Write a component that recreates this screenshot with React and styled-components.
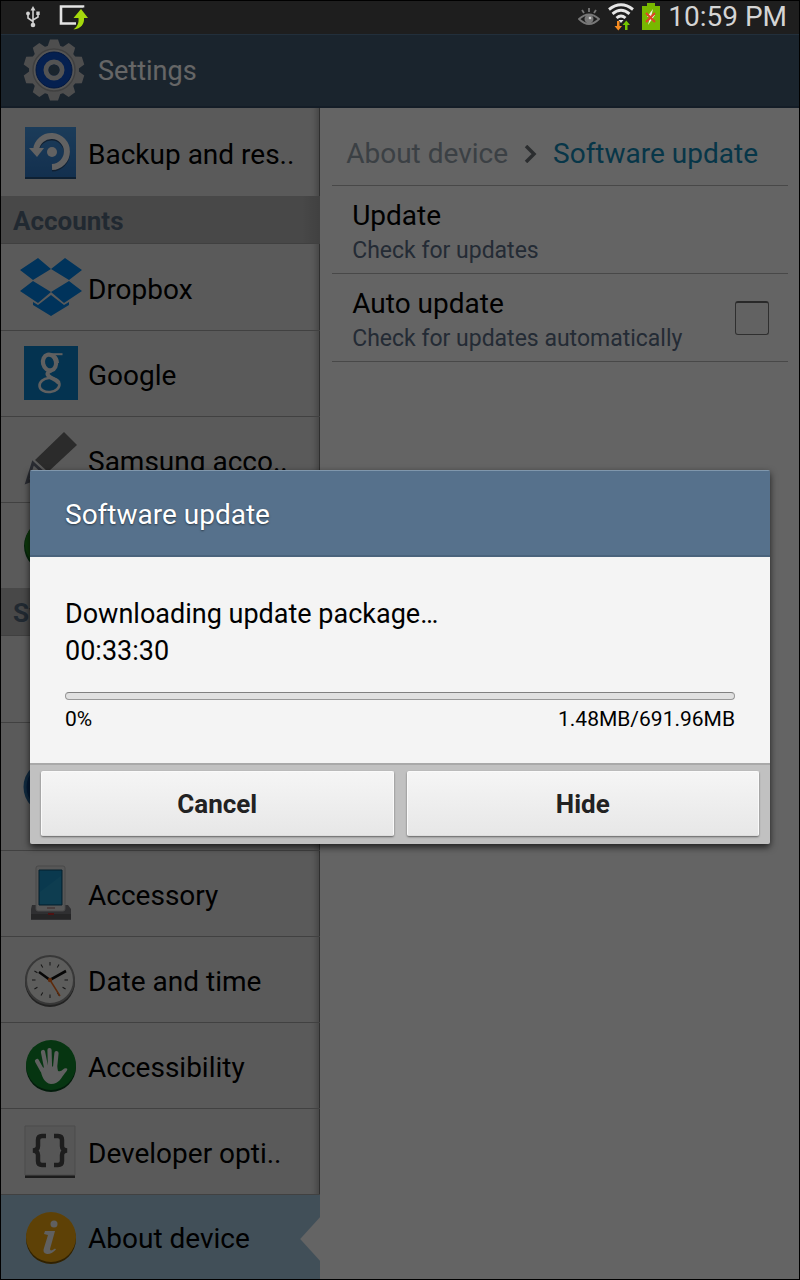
import React from 'react';
import styled, { createGlobalStyle } from 'styled-components';

const Global = createGlobalStyle`
  * { box-sizing: border-box; }
  body { margin: 0; background: #000; font-family: Roboto, "Liberation Sans", sans-serif; }
  button, input { font-family: inherit; }
  h1, h2, p, ul, ol { margin: 0; padding: 0; font-weight: 400; list-style: none; }
  svg { display: block; }
`;

const Page = styled.div`
  display: flex;
  flex-direction: column;
  min-height: 100vh;
  border: 1px solid #000;
  background: #f9f9f9;
`;

const StatusBar = styled.div`
  display: flex;
  align-items: center;
  height: 33px;
  padding: 0 12px 2px 24px;
  background: #1e1e1e;
  color: #d4d4d4;
`;

const StatusGroup = styled.div`
  display: flex;
  align-items: center;
  gap: ${(p) => p.$gap}px;
  margin-left: ${(p) => (p.$end ? 'auto' : '0')};
`;

const Clock = styled.time`
  font-size: 28px;
  line-height: 32px;
`;

const Screen = styled.div`
  position: relative;
  flex: 1;
  display: flex;
  flex-direction: column;
`;

const AppBar = styled.header`
  display: flex;
  align-items: center;
  gap: 12px;
  height: 74px;
  padding: 0 0 2px 21px;
  background: #435a72;
  border-top: 1px solid #567595;
  border-bottom: 2px solid #344a61;
  color: #fff;
`;

const AppTitle = styled.h1`
  padding-top: 2px;
  font-size: 27px;
  line-height: 36px;
`;

const Columns = styled.div`
  flex: 1;
  display: flex;
`;

const Sidebar = styled.nav`
  width: 40%;
  background: #e2e2e2;
  box-shadow: inset -1px 0 0 #777, inset -8px 0 6px -5px rgba(0, 0, 0, 0.28);
`;

const GroupTitle = styled.h2`
  height: 48px;
  padding-left: 12px;
  background: linear-gradient(90deg, #b5b5b5 94%, #a2a2a2);
  border-bottom: 1px solid #a0a0a0;
  color: #54677b;
  font-size: 26px;
  font-weight: 700;
  line-height: 50px;
`;

const NavItem = styled.li`
  border-top: 1px solid ${(p) => (p.$line ? '#a2a2a2' : 'transparent')};
`;

const NavLink = styled.a`
  position: relative;
  display: flex;
  align-items: center;
  gap: 5px;
  height: ${(p) => p.$height || 85}px;
  padding-left: 18px;
  background: ${(p) => (p.$selected ? '#a4c6dd' : 'transparent')};
  color: #000;
  font-size: 28px;
  line-height: 36px;
  text-decoration: none;
  white-space: nowrap;
`;

const NavIcon = styled.span`
  width: 64px;
  height: 64px;
`;

const NavLabel = styled.span`
  padding-top: 4px;
`;

const Pointer = styled.span`
  position: absolute;
  right: 0;
  top: 22px;
  width: 20px;
  height: 44px;
  background: #f9f9f9;
  clip-path: polygon(100% 0, 0 50%, 100% 100%);
`;

const Detail = styled.main`
  flex: 1;
  padding: 0 11px 0 12px;
`;

const Crumbs = styled.nav`
  display: flex;
  align-items: center;
  gap: 16px;
  height: 78px;
  padding: 15px 14px 0;
  border-bottom: 1px solid #b4b4b4;
  font-size: 28px;
  line-height: 36px;
  white-space: nowrap;
`;

const Crumb = styled.a`
  color: ${(p) => (p.$current ? '#1387b4' : '#93a0aa')};
  text-decoration: none;
`;

const Setting = styled.div`
  display: flex;
  align-items: center;
  justify-content: space-between;
  height: 88px;
  padding: 0 19px 0 20px;
  border-bottom: 1px solid #b4b4b4;
`;

const SettingText = styled.label`
  display: flex;
  flex-direction: column;
  padding-top: 6px;
`;

const SettingName = styled.span`
  color: #000;
  font-size: 28px;
  line-height: 36px;
`;

const SettingNote = styled.span`
  color: #5a6c84;
  font-size: 23px;
  line-height: 34px;
`;

const CheckBox = styled.input`
  appearance: none;
  width: 34px;
  height: 34px;
  margin: 0;
  border: 1px solid #777;
  border-top: 2px solid #666;
  border-radius: 3px;
  background: #f4f4f4;
`;

const Overlay = styled.div`
  position: absolute;
  inset: 0;
  display: flex;
  align-items: center;
  justify-content: center;
  padding: 1px 29px 0;
  background: rgba(0, 0, 0, 0.6);
`;

const Dialog = styled.section`
  width: 100%;
  border-radius: 2px;
  overflow: hidden;
  box-shadow: 0 3px 7px rgba(0, 0, 0, 0.7);
`;

const DialogTitle = styled.h2`
  height: 87px;
  padding-left: 35px;
  background: #56718c;
  border-top: 1px solid #8097ac;
  border-bottom: 2px solid #4a637c;
  color: #fff;
  font-size: 28px;
  line-height: 87px;
  text-shadow: 0 1px 2px rgba(0, 0, 0, 0.5);
`;

const DialogBody = styled.div`
  padding: 39px 35px 30px;
  background: #f4f4f4;
  color: #000;
`;

const Message = styled.p`
  font-size: 27px;
  line-height: 37px;
`;

const Track = styled.div`
  height: 8px;
  margin: 22px 0 5px;
  border: 1px solid #979797;
  border-top-color: #808080;
  border-radius: 4px;
  background: #e0e0e0;
`;

const Figures = styled.div`
  display: flex;
  justify-content: space-between;
  font-size: 21px;
  line-height: 28px;
`;

const Actions = styled.div`
  display: flex;
  gap: 13px;
  padding: 6px 11px 8px;
  background: #c1c1c1;
  border-top: 2px solid #a9a9a9;
`;

const ActionButton = styled.button`
  flex: 1;
  height: 65px;
  padding: 0;
  border: 1px solid #fafafa;
  border-bottom-color: #dedede;
  border-radius: 2px;
  background: linear-gradient(#f5f5f5, #e7e7e7);
  box-shadow: 0 1px 2px rgba(0, 0, 0, 0.5);
  color: #222;
  font-size: 26px;
  font-weight: 700;
`;

const UsbIcon = () => (
  <svg width="16" height="22" viewBox="0 0 16 22" fill="none" stroke="#d0d0d0" strokeWidth="1.6">
    <path d="M8 3v16M8 15.500 3 12V8M8 14l5-3V7" />
    <path d="M8 0l2.500 4.500h-5z" fill="#d0d0d0" stroke="none" />
    <circle cx="8" cy="19" r="2.300" fill="#d0d0d0" stroke="none" />
    <circle cx="3" cy="7.500" r="1.900" fill="#d0d0d0" stroke="none" />
    <path d="M11.300 5.500h3.400v3.400h-3.400z" fill="#d0d0d0" stroke="none" />
  </svg>
);

const UpdateIcon = () => (
  <svg width="30" height="26" viewBox="0 0 30 26">
    <path d="M24 3.500V2.500H2v17h15" fill="none" stroke="#e4e4e4" strokeWidth="2.600" />
    <path d="M22 5l7 9h-4c.5 6-3 10.500-10.500 11.500 4-3 5.500-6.500 5-11.500h-5z" fill="#a4d80c" />
  </svg>
);

const EyeIcon = () => (
  <svg width="22" height="20" viewBox="0 0 22 20" fill="none" stroke="#777" strokeWidth="1.800">
    <path d="M1 12q10-9 20 0-10 10-20 0z" />
    <circle cx="11" cy="12" r="3.600" fill="#777" />
    <circle cx="12" cy="11" r="1.300" fill="#ccc" stroke="none" />
    <path d="M11 5V1M6 6 4 3M16 6l2-3" />
  </svg>
);

const WifiIcon = () => (
  <svg width="26" height="28" viewBox="0 0 26 28" fill="none" stroke="#e6e6e6" strokeWidth="2.900">
    <path d="M1 6.500q12-9.500 24 0M4.500 10.800q8.500-7 17 0M8.500 15q4.500-4 9 0" />
    <path d="M10.500 17h5L13 20z" fill="#e6e6e6" stroke="none" />
    <path d="M9 18h2.500v5H14l-3.700 4.500L6.500 23H9z" fill="#f58a1f" stroke="none" />
    <path d="M17 27v-5h-2.500l3.800-4.500L22 22h-2.500v5z" fill="#74c700" stroke="none" />
  </svg>
);

const BatteryIcon = () => (
  <svg width="18" height="27" viewBox="0 0 18 27">
    <path d="M5 0h8v3h5v24H0V3h5z" fill="#78b800" />
    <path d="M11 6 5 14h3l-2 8 7-10H9.500z" fill="#f2f2e4" />
    <path d="M4 10l9 9M13 10l-9 9" stroke="#e04426" strokeWidth="2.200" />
  </svg>
);

const GearIcon = () => (
  <svg width="64" height="64" viewBox="-32 -32 64 64">
    <g fill="#c4c4c4">
      {[0, 36, 72, 108, 144, 180, 216, 252, 288, 324].map((a) => (
        <path key={a} d="M-7-22-4-30.500h8L7-22z" transform={`rotate(${a})`} />
      ))}
      <circle r="25" />
    </g>
    <circle r="21" fill="#d4d4d4" stroke="#a0a0a0" strokeWidth="1.500" />
    <circle r="18" fill="#0d50c8" stroke="#073a9c" />
    <circle r="8" fill="none" stroke="#cfcfcf" strokeWidth="5" />
    <circle r="5.500" fill="#435a72" />
  </svg>
);

const BackupIcon = () => (
  <svg width="64" height="64" viewBox="1 0 64 64">
    <defs>
      <linearGradient id="backup" x1="0" y1="0" x2="0" y2="1">
        <stop offset="0" stopColor="#4596e0" />
        <stop offset="1" stopColor="#3078c4" />
      </linearGradient>
    </defs>
    <path d="M7 8h51v50H7z" fill="#24507e" />
    <path d="M7 6h51v50H7z" fill="url(#backup)" />
    <g transform="translate(0 1.500)">
      <path d="M18 29a15.500 15.500 0 1 1 16 17" fill="none" stroke="#28507c" strokeWidth="6" />
    </g>
    <path d="M18 29a15.500 15.500 0 1 1 16 17" fill="none" stroke="#f4f4f4" strokeWidth="6" />
    <path d="M11 27h15l-7 9z" fill="#f4f4f4" />
    <circle cx="34" cy="31" r="5" fill="#f4f4f4" />
  </svg>
);

const DropboxIcon = () => (
  <svg width="64" height="64" viewBox="0 0 64 64" fill="#0080e4">
    <path d="M19 2 32 13 14 24 1 14zM46 2 63 14 50 24 32 13zM1 35 14 25 32 36 19 47zM50 25 63 35 45 47 32 36zM32 39 45 49l5-3v3L32 60 14 49v-3l5 3z" />
  </svg>
);

const GoogleIcon = () => (
  <svg width="64" height="64" viewBox="0 1 64 64">
    <path d="M5 5h54v54H5z" fill="#0c80c8" />
    <g fill="none" stroke="#f0f0f0">
      <ellipse cx="30.500" cy="21.500" rx="6.500" ry="8" strokeWidth="4.200" transform="rotate(-14 30.500 21.500)" />
      <path d="M31 13.200h12.500" strokeWidth="2" />
      <path d="M35 14q4 3 4 8" strokeWidth="2" />
      <path d="M32 29.500c-4 2-5 4-1 6.500q6 3 9 6" strokeWidth="4" />
      <ellipse cx="30.500" cy="44" rx="10" ry="7" strokeWidth="2.600" transform="rotate(-6 30.500 44)" />
    </g>
  </svg>
);

const PencilIcon = () => (
  <svg width="64" height="64" viewBox="0 0 64 64">
    <path d="M45 4 58 17 29 44 16 32z" fill="#6b6b6b" />
    <path d="M14 35 27 47 8 54z" fill="#ddd" stroke="#666c7c" strokeWidth="3" />
  </svg>
);

const AddIcon = () => (
  <svg width="64" height="64" viewBox="0 0 64 64">
    <circle cx="31" cy="32" r="26" fill="#0b5a1c" />
    <circle cx="31" cy="30" r="25" fill="#1f8a1c" />
    <path d="M31 16v28M17 30h28" stroke="#fff" strokeWidth="7" />
  </svg>
);

const PowerIcon = () => (
  <svg width="64" height="64" viewBox="0 0 64 64">
    <circle cx="31" cy="32" r="25" fill="#0b3f80" stroke="#2a689c" strokeWidth="3" />
  </svg>
);

const AccessoryIcon = () => (
  <svg width="64" height="64" viewBox="0 0 64 64">
    <path d="M13 43h36l3 4v11H12V47z" fill="#77777c" />
    <path d="M12 52h40v5H12z" fill="#5c5c60" />
    <rect x="17" y="4" width="29" height="45" rx="2" fill="#dadada" stroke="#b4b4b4" />
    <path d="M20 8h23v35H20z" fill="#1a90c4" stroke="#0d4c6c" />
    <path d="m21 30 21-16v28H21z" fill="#2ca0cc" opacity=".6" />
    <path d="M28 46h8" stroke="#a88" strokeWidth="1.500" />
    <path d="M29 52h6" stroke="#c03030" strokeWidth="2" />
  </svg>
);

const ClockIcon = () => (
  <svg width="64" height="64" viewBox="-32 -33 64 64">
    <circle cx="-1" cy="1" r="25" fill="#555" />
    <circle cx="-1" cy="-1" r="24" fill="#e8e8e6" stroke="#8c8c8c" strokeWidth="2" />
    {[0, 30, 60, 90, 120, 150, 180, 210, 240, 270, 300, 330].map((a) => (
      <path key={a} d="M0-18v3.500" transform={`translate(-1 -1) rotate(${a})`} stroke="#333" />
    ))}
    <path d="M-12-9-1-1 15-10" fill="none" stroke="#111" strokeWidth="2.600" />
    <path d="m-1-1 10 16" stroke="#e8681c" strokeWidth="1.500" />
    <circle cx="-1" cy="-1" r="2.200" fill="#e8681c" />
  </svg>
);

const HandIcon = () => (
  <svg width="64" height="64" viewBox="0 0 64 64">
    <circle cx="32" cy="33" r="25" fill="#07451c" />
    <circle cx="32" cy="31" r="25" fill="#10862c" />
    <g fill="none" stroke="#f0f0f0" strokeLinecap="round" strokeWidth="4.200">
      <path d="M23 36 18 27M27 33 24 18M31 33 30.500 16M36 34l1.500-15" />
    </g>
    <path d="M21 34l17-2 1 5q3 1 5-1.500 2-2 4-1c1 1-.500 3-2 4.500-4 5-6 11-14 11-7-1-9-7-11-16z" fill="#f0f0f0" />
  </svg>
);

const BracesIcon = () => (
  <svg width="64" height="64" viewBox="1 0 64 64">
    <path d="M7 9h50v49H7z" fill="#484848" />
    <path d="M7 6h50v49H7z" fill="#d8d8d8" stroke="#bbb" />
    <g fill="none" stroke="#4a4a4a" strokeWidth="4.500">
      <path d="M28 16h-4q-4 0-4 4v6q0 4-5 4.500 5 .5 5 4.500v6q0 4 4 4h4M36 16h4q4 0 4 4v6q0 4 5 4.500-5 .5-5 4.500v6q0 4-4 4h-4" />
    </g>
  </svg>
);

const InfoIcon = () => (
  <svg width="64" height="64" viewBox="0 -1 64 64">
    <circle cx="32" cy="33" r="25" fill="#7a5400" />
    <circle cx="32" cy="31" r="25" fill="#eca410" />
    <circle cx="35" cy="18" r="3.500" fill="#f0f0f0" />
    <path d="M26 25h10l-5 18q0 3 5-.500l1 1q-5 5-9 4.500-5-1-3-6l4-13-4-1z" fill="#f0f0f0" />
  </svg>
);

const groups = [
  { items: [{ label: 'Backup and res..', icon: BackupIcon, height: 87 }] },
  {
    title: 'Accounts',
    items: [
      { label: 'Dropbox', icon: DropboxIcon },
      { label: 'Google', icon: GoogleIcon },
      { label: 'Samsung acco..', icon: PencilIcon },
      { icon: AddIcon },
    ],
  },
  {
    title: 'System',
    items: [
      {},
      { icon: PowerIcon, height: 127 },
      { label: 'Accessory', icon: AccessoryIcon },
      { label: 'Date and time', icon: ClockIcon },
      { label: 'Accessibility', icon: HandIcon },
      { label: 'Developer opti..', icon: BracesIcon },
      { label: 'About device', icon: InfoIcon, selected: true, height: 84 },
    ],
  },
];

export default function App() {
  return (
    <>
      <Global />
      <Page>
        <StatusBar>
          <StatusGroup $gap={18}>
            <UsbIcon />
            <UpdateIcon />
          </StatusGroup>
          <StatusGroup $gap={8} $end>
            <EyeIcon />
            <WifiIcon />
            <BatteryIcon />
            <Clock>10:59 PM</Clock>
          </StatusGroup>
        </StatusBar>
        <Screen>
          <AppBar>
            <GearIcon />
            <AppTitle>Settings</AppTitle>
          </AppBar>
          <Columns>
            <Sidebar>
              {groups.map((group, g) => (
                <React.Fragment key={g}>
                  {group.title && <GroupTitle>{group.title}</GroupTitle>}
                  <ul>
                    {group.items.map(({ label, icon: Icon, selected, height }, i) => (
                      <NavItem key={i} $line={i > 0}>
                        <NavLink href="#" $selected={selected} $height={height}>
                          <NavIcon>{Icon && <Icon />}</NavIcon>
                          {label && <NavLabel>{label}</NavLabel>}
                          {selected && <Pointer />}
                        </NavLink>
                      </NavItem>
                    ))}
                  </ul>
                </React.Fragment>
              ))}
            </Sidebar>
            <Detail>
              <Crumbs>
                <Crumb href="#">About device</Crumb>
                <svg width="13" height="18" viewBox="0 0 13 18" fill="none" stroke="#6c7276" strokeWidth="3.500">
                  <path d="m2 1 8 8-8 8" />
                </svg>
                <Crumb href="#" $current>Software update</Crumb>
              </Crumbs>
              <Setting>
                <SettingText as="div">
                  <SettingName>Update</SettingName>
                  <SettingNote>Check for updates</SettingNote>
                </SettingText>
              </Setting>
              <Setting>
                <SettingText htmlFor="auto-update">
                  <SettingName>Auto update</SettingName>
                  <SettingNote>Check for updates automatically</SettingNote>
                </SettingText>
                <CheckBox id="auto-update" type="checkbox" />
              </Setting>
            </Detail>
          </Columns>
          <Overlay>
            <Dialog role="dialog" aria-labelledby="dialog-title">
              <DialogTitle id="dialog-title">Software update</DialogTitle>
              <DialogBody>
                <Message>Downloading update package…</Message>
                <Message>00:33:30</Message>
                <Track role="progressbar" aria-valuenow={0} aria-label="Download" />
                <Figures>
                  <span>0%</span>
                  <span>1.48MB/691.96MB</span>
                </Figures>
              </DialogBody>
              <Actions>
                <ActionButton type="button">Cancel</ActionButton>
                <ActionButton type="button">Hide</ActionButton>
              </Actions>
            </Dialog>
          </Overlay>
        </Screen>
      </Page>
    </>
  );
}
